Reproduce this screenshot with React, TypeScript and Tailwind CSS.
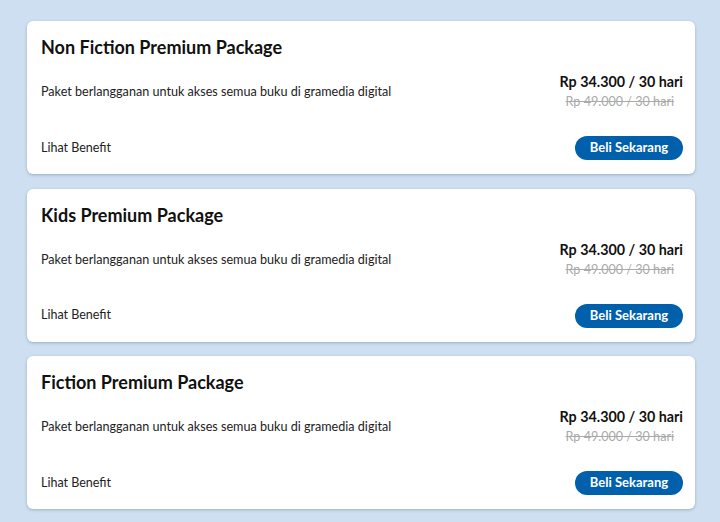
import React from 'react';

const packages = ['Non Fiction Premium Package', 'Kids Premium Package', 'Fiction Premium Package'];

function PackageCard({ title }: { title: string }) {
  return (
    <div className="rounded-md bg-white pt-[14px] pb-[14px] pl-[14px] pr-[12px] shadow-[0_1px_3px_rgba(60,90,120,0.35)]">
      <div className="h-[24px] text-[18px] leading-[24px] font-bold text-[#111]">{title}</div>
      <div className="mt-[13px] flex h-[40px] items-center justify-between">
        <div className="text-[12.6px] leading-[16px] text-[#222]">
          Paket berlangganan untuk akses semua buku di gramedia digital
        </div>
        <div className="flex flex-col items-end">
          <div className="text-[14.3px] leading-[20px] font-bold text-[#111]">Rp 34.300 / 30 hari</div>
          <div className="pr-[9px] text-[12.6px] leading-[20px] text-[#aaa] line-through">Rp 49.000 / 30 hari</div>
        </div>
      </div>
      <div className="mt-[24px] flex h-[24px] items-center justify-between">
        <div className="text-[12.5px] text-[#222]">Lihat Benefit</div>
        <button className="h-[24px] w-[108px] rounded-full bg-[#0160ac] text-[13px] font-bold text-white">
          Beli Sekarang
        </button>
      </div>
    </div>
  );
}

export default function App() {
  return (
    <div
      className="flex min-h-[522px] flex-col gap-[14.5px] bg-[#cddff0] pr-[25px] pt-[21px] pl-[27px]"
      style={{ fontFamily: "Lato, 'Noto Sans', sans-serif" }}
    >
      {packages.map((p) => (
        <PackageCard key={p} title={p} />
      ))}
    </div>
  );
}
